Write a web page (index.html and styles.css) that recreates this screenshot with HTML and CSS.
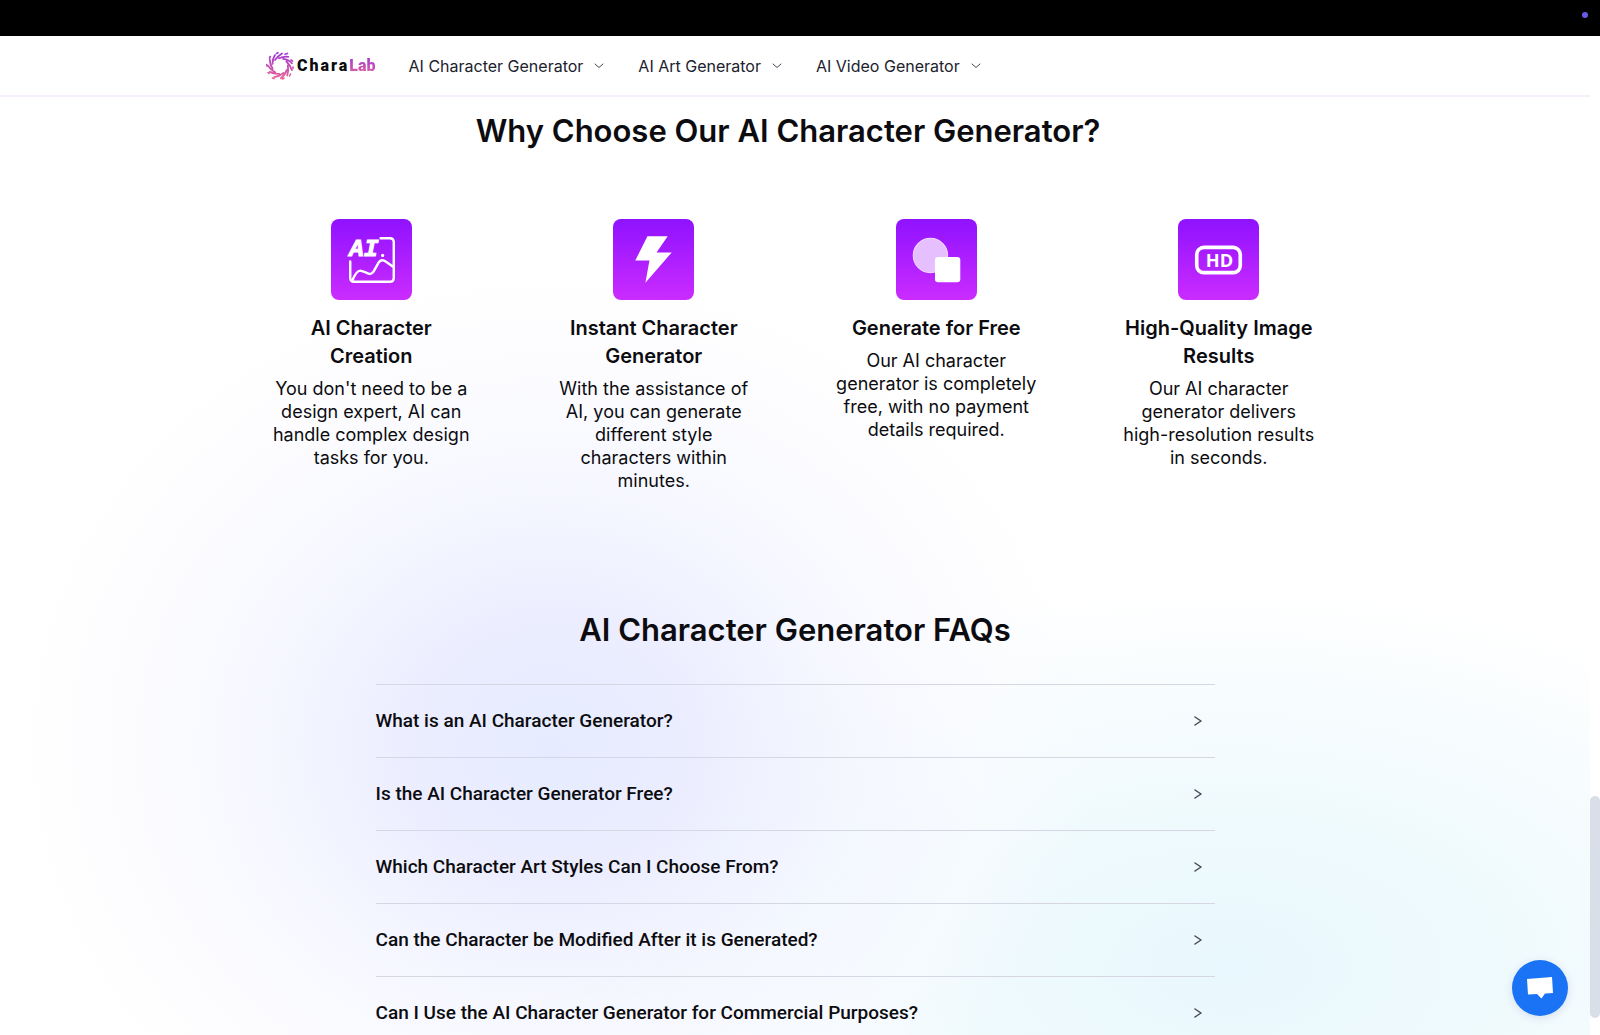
FILE: index.html
```html
<!DOCTYPE html>
<html lang="en">
<head>
<meta charset="utf-8">
<title>CharaLab</title>
<link rel="stylesheet" href="styles.css">
</head>
<body>
<div class="top-strip"><span class="status-dot"></span></div>
<div class="page">
  <header class="site-header">
    <a class="logo" href="#">
      <svg class="logo-mark" viewBox="-14 -14 28 28" aria-hidden="true">
        <defs>
          <linearGradient id="swirl" gradientUnits="userSpaceOnUse" x1="0" y1="-14" x2="0" y2="14"><stop offset="0" stop-color="#9b35d6"/><stop offset="1" stop-color="#ea6690"/></linearGradient>
        </defs>
        <g fill="none" stroke="url(#swirl)" stroke-linecap="round">
          <path stroke-width="1.8" d="M-5-6Q-2-10 2-12.500M-1-7.800Q4-10 8.300-9.200M3.100-7.200Q8.700-6.500 12-2.700M6.400-4.500Q10.500-.6 11.900 4.200M7.800-.4Q8.900 5.100 7.200 9.500M6.700 4Q5 9.400 .8 12.300M3.500 7Q-.8 10.500-5.800 11.100M-.8 7.800Q-6.300 8.100-10.300 5.900M-4.800 6.200Q-9.700 3.600-12.100-.4M-7.300 2.800Q-10.300-1.800-10.200-6.600M-7.500-2.100Q-7.600-7.400-5-11.100"/>
          <path stroke-width="1.600" d="M5-11.800l2.500-.8M11-6l1.500 1M13 1v1.500M10.500 8l-1 2M4 12l-1.500 1M-6 12.500l-1.500-.5M-11 7.500l-1-1M-13 0l-.300-1.500M-10.500-8l.8-1.500M-3.500-12.500l1.500-.7"/>
        </g>
      </svg>
      <span class="logo-text">Chara<span class="logo-accent">Lab</span></span>
    </a>
    <nav class="main-nav">
      <button class="nav-item" type="button">AI Character Generator <svg class="nav-arrow" viewBox="0 0 10 6" aria-hidden="true"><path d="M1 1l4 3.500 4-3.500"/></svg></button>
      <button class="nav-item" type="button">AI Art Generator <svg class="nav-arrow" viewBox="0 0 10 6" aria-hidden="true"><path d="M1 1l4 3.500 4-3.500"/></svg></button>
      <button class="nav-item" type="button">AI Video Generator <svg class="nav-arrow" viewBox="0 0 10 6" aria-hidden="true"><path d="M1 1l4 3.500 4-3.500"/></svg></button>
    </nav>
  </header>
  <main>
    <section class="features">
      <h2 class="section-title features-title">Why Choose Our AI Character Generator?</h2>
      <div class="feature-grid">
        <article class="feature">
          <svg class="feature-icon" viewBox="0 0 80 80" aria-hidden="true">
            <g fill="none" stroke="#fff" stroke-width="2.400" stroke-linecap="round" stroke-linejoin="round">
              <path d="M49 19h9q4 0 4 4v35q0 4-4 4H23q-4 0-4-4V42"/>
              <path d="M21 61q4-10 8-10 4 1 8 3 3 1 5-2l5-9q3-4 7-1l7 5"/>
            </g>
            <text class="icon-ai" x="18" y="37">AI</text><circle cx="51" cy="36" r="1.600" fill="#fff"/>
          </svg>
          <h3 class="feature-name">AI Character<br>Creation</h3>
          <p class="feature-text">You don't need to be a<br>design expert, AI can<br>handle complex design<br>tasks for you.</p>
        </article>
        <article class="feature">
          <svg class="feature-icon" viewBox="0 0 80 80" aria-hidden="true"><path fill="#fff" d="M34 17h20L43 33h15L32 63l4-22H22z"/></svg>
          <h3 class="feature-name">Instant Character<br>Generator</h3>
          <p class="feature-text">With the assistance of<br>AI, you can generate<br>different style<br>characters within<br>minutes.</p>
        </article>
        <article class="feature">
          <svg class="feature-icon" viewBox="0 0 80 80" aria-hidden="true"><circle cx="34" cy="36" r="17" fill="#e6bfff" stroke="#f1d9ff"/><rect x="38.500" y="37.500" width="25" height="25" rx="3" fill="#fff"/></svg>
          <h3 class="feature-name">Generate for Free</h3>
          <p class="feature-text">Our AI character<br>generator is completely<br>free, with no payment<br>details required.</p>
        </article>
        <article class="feature">
          <svg class="feature-icon" viewBox="0 0 80 80" aria-hidden="true"><rect x="18.500" y="28" width="43" height="25" rx="7" fill="none" stroke="#fff" stroke-width="3.600"/><text class="icon-hd" x="41" y="47">HD</text></svg>
          <h3 class="feature-name">High-Quality Image<br>Results</h3>
          <p class="feature-text">Our AI character<br>generator delivers<br>high-resolution results<br>in seconds.</p>
        </article>
      </div>
    </section>
    <section class="faq">
      <h2 class="section-title">AI Character Generator FAQs</h2>
      <div class="faq-list">
        <button class="faq-row" type="button">What is an AI Character Generator? <svg class="faq-arrow" viewBox="0 0 8 10" aria-hidden="true"><path d="M1 1l6 4-6 4"/></svg></button>
        <button class="faq-row" type="button">Is the AI Character Generator Free? <svg class="faq-arrow" viewBox="0 0 8 10" aria-hidden="true"><path d="M1 1l6 4-6 4"/></svg></button>
        <button class="faq-row" type="button">Which Character Art Styles Can I Choose From? <svg class="faq-arrow" viewBox="0 0 8 10" aria-hidden="true"><path d="M1 1l6 4-6 4"/></svg></button>
        <button class="faq-row" type="button">Can the Character be Modified After it is Generated? <svg class="faq-arrow" viewBox="0 0 8 10" aria-hidden="true"><path d="M1 1l6 4-6 4"/></svg></button>
        <button class="faq-row" type="button">Can I Use the AI Character Generator for Commercial Purposes? <svg class="faq-arrow" viewBox="0 0 8 10" aria-hidden="true"><path d="M1 1l6 4-6 4"/></svg></button>
      </div>
    </section>
  </main>
</div>
<div class="scroll-track"><div class="scroll-thumb"></div></div>
<button class="chat-button" type="button" aria-label="Open chat">
  <svg class="chat-icon" viewBox="0 0 28 24" aria-hidden="true"><path fill="#fff" d="M1 3l25-2 1 16-8 .5-3.500 5-4.500-4.500-9 .5z"/></svg>
</button>
</body>
</html>
```
FILE: styles.css
```css
* { box-sizing: border-box; }

body {
  margin: 0;
  height: 100vh;
  overflow: hidden;
  display: flex;
  flex-direction: column;
  background: #fff;
  color: #0c0c10;
  font-family: Inter, "Liberation Sans", sans-serif;
}

button {
  border: 0;
  padding: 0;
  background: none;
  color: inherit;
  font-family: inherit;
  cursor: pointer;
}

h2, h3, p { margin: 0; }

.top-strip {
  flex: none;
  height: 36px;
  display: flex;
  justify-content: flex-end;
  padding: 12px 12px 0 0;
  background: #000;
}

.status-dot {
  width: 6px;
  height: 6px;
  border-radius: 50%;
  background: #665be8;
}

.page {
  flex: 1;
  min-height: 0;
  overflow: hidden;
  margin-right: 10px;
  background:
    radial-gradient(ellipse 540px 480px at 550px 710px, rgba(228, 234, 255, .95), rgba(233, 235, 255, .85) 28%, rgba(242, 244, 255, .65) 55%, rgba(250, 250, 255, .5) 80%, rgba(255, 255, 255, 0)),
    radial-gradient(ellipse 680px 380px at 1230px 930px, #e9f8fe, #effafd 40%, #f7fcfe 70%, rgba(255, 255, 255, 0)),
    #fff;
}

.site-header {
  height: 61px;
  display: flex;
  align-items: center;
  gap: 33px;
  padding-left: 266px;
  border-bottom: 2px solid #f7effc;
  background: #fff;
}

.logo {
  display: flex;
  align-items: center;
  gap: 3px;
  text-decoration: none;
  color: #0c0c10;
}

.logo-mark { width: 28px; height: 28px; }

.logo-text {
  font: 900 16px/20px Roboto, sans-serif;
  letter-spacing: 2px;
}

.logo-accent {
  letter-spacing: 0;
  color: transparent;
  background: linear-gradient(#9b35d6, #e8639c);
  background-clip: text;
}

.main-nav { display: flex; gap: 34px; }

.nav-item {
  display: flex;
  align-items: center;
  gap: 11px;
  font-size: 16px;
  line-height: 24px;
  color: #20222e;
}

.nav-arrow { width: 10px; height: 6px; }

.nav-arrow path, .faq-arrow path {
  fill: none;
  stroke: #454754;
  stroke-linecap: round;
  stroke-linejoin: round;
}

.section-title {
  font-size: 31px;
  line-height: 40px;
  font-weight: 600;
  text-align: center;
}

.features { padding: 14px 0 0; }

.features-title { padding-right: 14px; }

.feature-grid {
  width: 1130px;
  max-width: 100%;
  margin: 68px auto 0;
  display: grid;
  grid-template-columns: repeat(4, 1fr);
}

.feature { text-align: center; }

.feature-icon {
  display: block;
  width: 81px;
  height: 81px;
  margin: 0 auto 14px;
  border-radius: 8px;
  background: linear-gradient(#8f12ff, #cb2cff);
}

.icon-ai {
  font: italic 700 24px "Liberation Mono", monospace;
  fill: #fff;
  stroke: #fff;
  stroke-width: 1px;
}

.icon-hd {
  font: 700 18px "Open Sans", sans-serif;
  fill: #fff;
  text-anchor: middle;
}

.feature-name {
  font-size: 20px;
  line-height: 28px;
  font-weight: 600;
}

.feature-text {
  margin-top: 7px;
  font-size: 18px;
  line-height: 23px;
}

.faq { margin-top: 118px; }

.faq-list {
  width: 839px;
  max-width: 100%;
  margin: 34px auto 0;
}

.faq-row {
  display: flex;
  justify-content: space-between;
  align-items: center;
  width: 100%;
  height: 73px;
  padding-right: 13px;
  border-top: 1px solid #d5d8e3;
  font-family: Roboto, "Liberation Sans", sans-serif;
  font-size: 19px;
  line-height: 28px;
  font-weight: 500;
}

.faq-arrow { width: 8px; height: 10px; }

.faq-arrow path { stroke-width: 1.5px; }

.scroll-track {
  position: fixed;
  top: 36px;
  right: 0;
  bottom: 0;
  width: 10px;
  padding-top: 760px;
  background: #fff;
}

.scroll-thumb {
  height: 222px;
  border-radius: 5px;
  background: #d9dfe9;
}

.chat-button {
  position: fixed;
  right: 32px;
  bottom: 19px;
  width: 56px;
  height: 56px;
  display: grid;
  place-items: center;
  border-radius: 50%;
  background: #1a73f5;
  box-shadow: 0 2px 8px rgba(60, 60, 140, .15);
}

.chat-icon { width: 28px; height: 24px; }
```
